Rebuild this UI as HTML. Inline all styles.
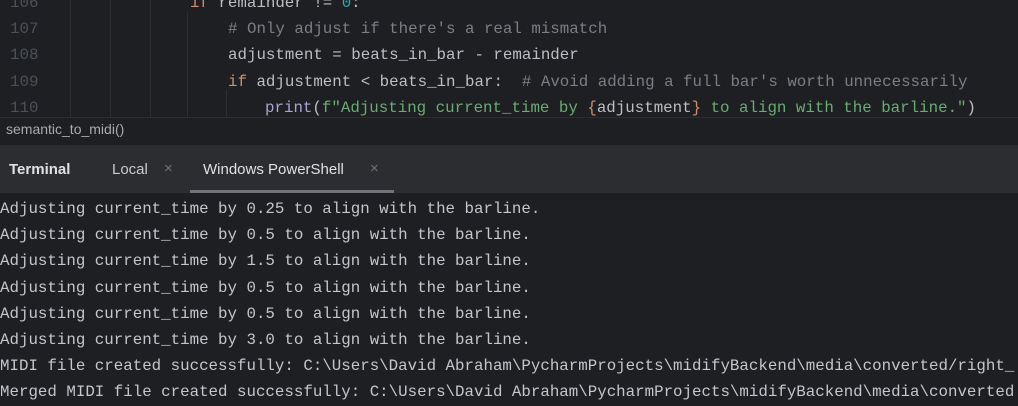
<!DOCTYPE html>
<html><head><style>
html,body{margin:0;padding:0;}
body{width:1018px;height:402px;overflow:hidden;background:#1e1f22;position:relative;font-family:"Liberation Mono",monospace;}
.mono{font-family:"Liberation Mono",monospace;font-size:15.8px;white-space:pre;position:absolute;line-height:26.2px;}
.ln{color:#4b5059;left:10px;}
.code{left:0;color:#bcbec4;}
.kw{color:#cf8e6d}.cm{color:#7a7e85}.st{color:#6aab73}.fn{color:#a9a3d6}.num{color:#2aacb8}
.guide{position:absolute;top:0;height:118px;width:1px;background:#2c2e33;}
.term{left:0;color:#c4c6cc;width:1018px;overflow:hidden;}
.sans{font-family:"Liberation Sans",sans-serif;position:absolute;}
</style></head><body>
<div class="guide" style="left:70px"></div>
<div class="guide" style="left:110px"></div>
<div class="guide" style="left:150px"></div>
<div class="guide" style="left:187px;top:12px"></div>
<div class="guide" style="left:226px;top:90px;height:28px"></div>
<div class="mono ln" style="top:-10px">106
107
108
109
110</div>
<div class="mono code" style="top:-10px;left:0"><span style="padding-left:190px"></span><span class="kw">if</span> remainder != <span class="num">0</span>:
<span style="padding-left:228px"></span><span class="cm"># Only adjust if there's a real mismatch</span>
<span style="padding-left:228px"></span>adjustment = beats_in_bar - remainder
<span style="padding-left:228px"></span><span class="kw">if</span> adjustment &lt; beats_in_bar:  <span class="cm"># Avoid adding a full bar's worth unnecessarily</span>
<span style="padding-left:265px"></span><span class="fn">print</span>(<span class="st">f"Adjusting current_time by </span><span class="kw">{</span>adjustment<span class="kw">}</span><span class="st"> to align with the barline."</span>)</div>
<div style="position:absolute;left:0;top:117px;width:1018px;height:1px;background:#2b2d30"></div>
<div style="position:absolute;left:0;top:118px;width:1018px;height:27px;background:#1e1f22"></div>
<div class="sans" style="left:6px;top:121px;font-size:14px;color:#a8abb0">semantic_to_midi()</div>
<div style="position:absolute;left:0;top:145px;width:1018px;height:48px;background:#2b2d30"></div>
<div class="sans" style="left:9px;top:161px;font-size:15px;color:#dfe1e5;font-weight:bold">Terminal</div>
<div class="sans" style="left:112px;top:161px;font-size:15px;color:#c8cacd">Local</div>
<div class="sans" style="left:164px;top:160px;font-size:15px;color:#6f737a">×</div>
<div class="sans" style="left:203px;top:161px;font-size:15px;color:#dfe1e5">Windows PowerShell</div>
<div class="sans" style="left:370px;top:160px;font-size:15px;color:#6f737a">×</div>
<div style="position:absolute;left:190px;top:190px;width:204px;height:3px;background:#6f737a"></div>
<div class="mono term" style="top:196px">Adjusting current_time by 0.25 to align with the barline.
Adjusting current_time by 0.5 to align with the barline.
Adjusting current_time by 1.5 to align with the barline.
Adjusting current_time by 0.5 to align with the barline.
Adjusting current_time by 0.5 to align with the barline.
Adjusting current_time by 3.0 to align with the barline.
MIDI file created successfully: C:\Users\David Abraham\PycharmProjects\midifyBackend\media\converted/right_
Merged MIDI file created successfully: C:\Users\David Abraham\PycharmProjects\midifyBackend\media\converted</div>
</body></html>
